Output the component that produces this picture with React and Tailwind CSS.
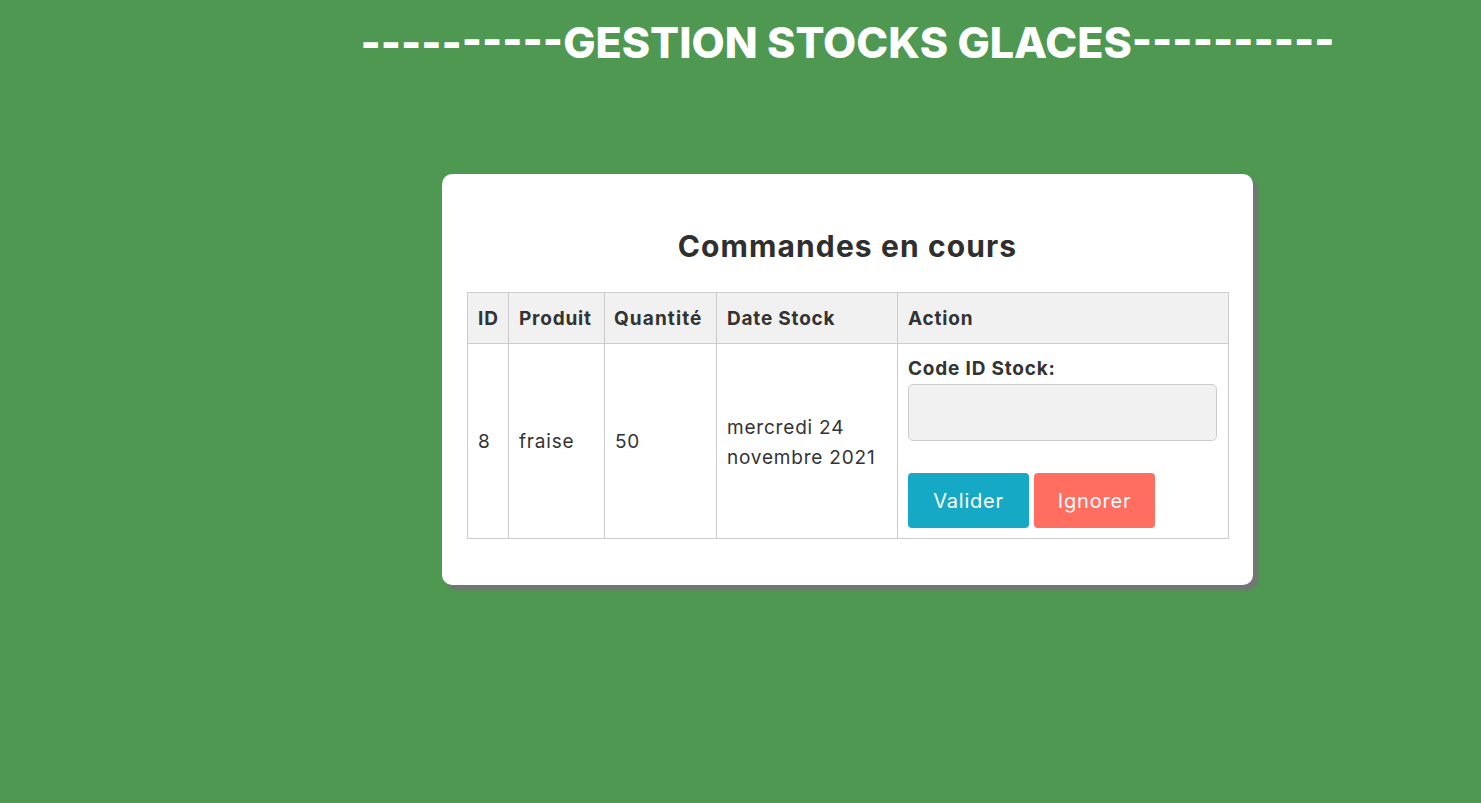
export default function App() {
  const font = { fontFamily: 'Inter, "Noto Sans", sans-serif' };
  return (
    <div className="min-h-screen bg-[#4e9852] text-[#333]" style={font}>
      <div className="pl-[214px] flex flex-col items-center">
        <h1 className="mt-[14px] h-[56px] text-[43px] leading-[56px] font-extrabold text-white tracking-[0px] whitespace-nowrap">
          ----------GESTION STOCKS GLACES----------
        </h1>
        <div className="mt-[104px] w-[811px] bg-white rounded-[10px] shadow-[5px_5px_3px_#757575] px-[25px] pt-[54px] pb-[46px]">
          <h2 className="text-center text-[30px] leading-[36px] font-bold text-[#2f2f2f] tracking-[1.1px] mb-[28px]">
            Commandes en cours
          </h2>
          <table className="w-[761px] table-fixed border-collapse text-[19px] tracking-[0.8px]">
            <colgroup>
              <col className="w-[41px]" />
              <col className="w-[96px]" />
              <col className="w-[112px]" />
              <col className="w-[181px]" />
              <col className="w-[331px]" />
            </colgroup>
            <thead>
              <tr className="bg-[#f1f1f1] h-[51px]">
                <th className="border border-[#cccccc] px-[10px] pt-[2px] text-left font-bold">ID</th>
                <th className="border border-[#cccccc] px-[10px] pt-[2px] text-left font-bold">Produit</th>
                <th className="border border-[#cccccc] px-[9px] pt-[2px] text-left font-bold tracking-[1.1px]">Quantité</th>
                <th className="border border-[#cccccc] px-[10px] pt-[2px] text-left font-bold">Date Stock</th>
                <th className="border border-[#cccccc] px-[10px] pt-[2px] text-left font-bold">Action</th>
              </tr>
            </thead>
            <tbody>
              <tr>
                <td className="border border-[#cccccc] px-[10px] pt-[3px] align-middle">8</td>
                <td className="border border-[#cccccc] px-[10px] pt-[3px] align-middle">fraise</td>
                <td className="border border-[#cccccc] px-[10px] pt-[3px] align-middle">50</td>
                <td className="border border-[#cccccc] px-[10px] pt-[3px] align-middle leading-[30px]">mercredi 24 novembre 2021</td>
                <td className="border border-[#cccccc] px-[10px] pt-[11px] pb-[10px] align-top">
                  <label className="block font-bold leading-[27px]">Code ID Stock:</label>
                  <input className="block mt-[2px] w-[309px] h-[57px] bg-[#f1f1f1] border border-[#cccccc] rounded-[5px]" />
                  <div className="mt-[32px] flex gap-[5px]">
                    <button className="w-[121px] h-[55px] rounded-[4px] bg-[#16a9c6] text-white text-[20px] tracking-[0.8px]">Valider</button>
                    <button className="w-[121px] h-[55px] rounded-[4px] bg-[#ff6e61] text-white text-[20px] tracking-[0.8px]">Ignorer</button>
                  </div>
                </td>
              </tr>
            </tbody>
          </table>
        </div>
      </div>
    </div>
  );
}
